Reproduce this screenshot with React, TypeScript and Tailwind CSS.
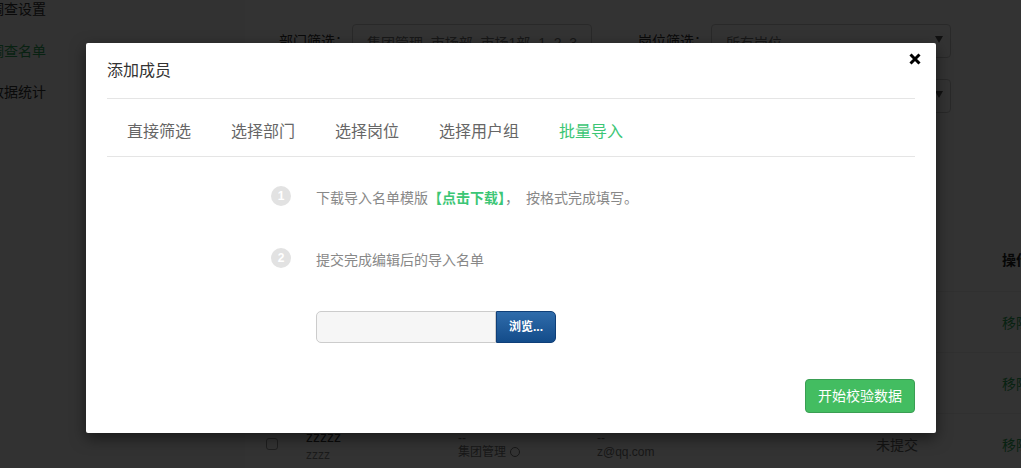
const FONT = "font-['Liberation_Sans','Noto_Sans_CJK_SC',sans-serif]";

function Select({ text, className, arrow = true }: { text: string; className: string; arrow?: boolean }) {
  return (
    <div className={`relative flex h-[34px] shrink-0 items-center rounded border border-[#ccc] bg-white pl-[14px] pt-[4px] text-sm text-[#777] ${className}`}>
      <span className="whitespace-nowrap">{text}</span>
      {arrow ? (
        <span className="absolute right-[7px] top-[11px] h-0 w-0 border-x-[4px] border-t-[7px] border-x-transparent border-t-[#555]" />
      ) : null}
    </div>
  );
}

function Row({ last }: { last?: boolean }) {
  return (
    <div className="flex h-[61px] items-center border-t border-[#eee]">
      <span className="h-[12px] w-[12px] shrink-0 rounded-[3px] border border-[#999]" />
      {last ? (
        <>
          <div className="ml-[28px] w-[152px] shrink-0 pt-[2px] leading-[14px]">
            <div className="text-sm text-[#333]">zzzzz</div>
            <div className="text-xs text-[#888]">zzzz</div>
          </div>
          <div className="w-[139px] shrink-0 pt-[2px] text-xs leading-[14px] text-[#777]">
            <div>--</div>
            <div className="flex items-center gap-1">
              集团管理
              <span className="h-[10px] w-[10px] rounded-full border border-[#777]" />
            </div>
          </div>
          <div className="w-[279px] shrink-0 pt-[2px] text-xs leading-[14px] text-[#777]">
            <div>--</div>
            <div>z@qq.com</div>
          </div>
          <span className="pt-[2px] text-sm whitespace-nowrap text-[#666]">未提交</span>
        </>
      ) : null}
      <span className="absolute left-[1002px] pt-[2px] text-sm whitespace-nowrap text-[#2fa85a]">移除</span>
    </div>
  );
}

function Page() {
  return (
    <div className="flex h-[468px] w-[1021px] bg-white">
      <aside className="w-[217px] shrink-0 bg-[#f7f7f7]">
        <div className="-ml-[10px] flex flex-col text-sm leading-[42px] text-[#333]">
          <div className="-mt-[12px]">调查设置</div>
          <div className="text-[#2fa85a]">调查名单</div>
          <div className="-mt-[1px]">数据统计</div>
        </div>
      </aside>
      <div className="w-[28px] shrink-0 bg-[#fafafa]" />
      <main className="min-w-0 flex-1 bg-white pl-[21px]">
        <div className="flex items-center pt-[24px]">
          <span className="w-[86px] shrink-0 pl-[13px] text-sm whitespace-nowrap text-[#333]">部门筛选：</span>
          <Select text="集团管理_市场部_市场1部_1_2_3" className="w-[240px]" arrow={false} />
          <span className="ml-[46px] w-[73px] shrink-0 text-sm whitespace-nowrap text-[#333]">岗位筛选：</span>
          <Select text="所有岗位" className="w-[240px]" />
        </div>
        <div className="flex justify-end pr-[70px] pt-[21px]">
          <Select text="" className="w-[240px]" />
        </div>
        <div className="flex h-[178px] items-end pb-[21px] pl-[736px] text-sm font-bold whitespace-nowrap text-[#222]">操作</div>
        <Row />
        <Row />
        <Row last />
      </main>
    </div>
  );
}

export default function App() {
  return (
    <div className={`relative h-[468px] w-[1021px] overflow-hidden ${FONT}`}>
      <Page />
      <div className="absolute inset-0 bg-black/80" />
      <div className="absolute left-[86px] top-[43px] h-[390px] w-[850px] rounded-[2px] bg-white shadow-[0_5px_15px_rgba(0,0,0,0.5)]">
        <button className="absolute right-[15px] top-[10px] text-black">
          <svg width="12" height="12" viewBox="0 0 12 12">
            <path d="M1.5 1.5L10.5 10.5M10.5 1.5L1.5 10.5" stroke="currentColor" strokeWidth="3" fill="none" />
          </svg>
        </button>
        <div className="mx-[21px]">
          <div className="flex h-[56px] items-center border-b border-[#e5e5e5] text-base text-[#333]">添加成员</div>
          <div className="flex h-[58px] items-center gap-10 border-b border-[#e5e5e5] pl-5 pt-[8px] text-base text-[#666]">
            <span>直接筛选</span>
            <span>选择部门</span>
            <span>选择岗位</span>
            <span>选择用户组</span>
            <span className="text-[#3cc675]">批量导入</span>
          </div>
        </div>
        <div className="pl-[185px] pt-[29px] text-sm text-[#888]">
          <div className="flex h-5 items-center">
            <span className="flex h-5 w-5 items-center justify-center rounded-full bg-[#e2e2e2] text-xs font-bold text-white">1</span>
            <span className="ml-[25px] mt-[4px]">
              下载导入名单模版<b className="text-[#3cc675]">【点击下载】</b>，<span className="ml-[7px]">按格式完成填写。</span>
            </span>
          </div>
          <div className="mt-[42px] flex h-5 items-center">
            <span className="flex h-5 w-5 items-center justify-center rounded-full bg-[#e2e2e2] text-xs font-bold text-white">2</span>
            <span className="ml-[25px] mt-[3px]">提交完成编辑后的导入名单</span>
          </div>
          <div className="ml-[45px] mt-[43px] flex h-8 w-[240px]">
            <div className="w-[180px] rounded-l-[5px] border border-[#ccc] bg-[#f6f6f6]" />
            <button className="w-[60px] rounded-r-[5px] border border-[#0f3f78] bg-gradient-to-b from-[#2f6cab] to-[#134c8a] text-xs font-bold text-white">浏览...</button>
          </div>
        </div>
        <button className="absolute bottom-[20px] right-[21px] h-[34px] w-[110px] rounded border border-[#3a9e53] bg-[#43bd61] text-sm text-white">开始校验数据</button>
      </div>
    </div>
  );
}
